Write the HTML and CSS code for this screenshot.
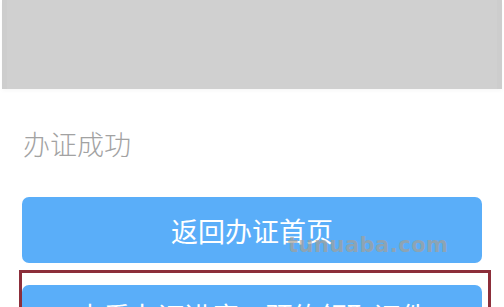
FILE: index.html
```html
<!DOCTYPE html>
<html lang="zh-CN">
<head>
<meta charset="utf-8">
<link rel="stylesheet" href="styles.css">
</head>
<body>
  <div class="header"></div>
  <div class="title">办证成功</div>
  <div class="btn btn-home">返回办证首页<span class="watermark">tunuaba.com</span></div>
  <div class="highlight">
    <div class="btn btn-next">查看办证进度，预约领取证件</div>
  </div>
</body>
</html>
```

FILE: styles.css
```css
html, body {
  margin: 0;
  padding: 0;
  background: #ffffff;
  font-family: "Noto Sans CJK SC", "Noto Sans", sans-serif;
  overflow: hidden;
}

.header {
  height: 89px;
  margin: 0 2px;
  background: #d0d0d0;
  border-left: 5px solid #cdcdcd;
  border-right: 5px solid #cdcdcd;
  box-shadow: 0 2px 4px rgba(0, 0, 0, 0.03);
}

.title {
  margin-top: 40px;
  padding-left: 23px;
  font-size: 27px;
  line-height: 30px;
  color: #a2a2a2;
  font-weight: 300;
}

.btn {
  position: relative;
  height: 66px;
  width: 460px;
  border-radius: 7px;
  background: #5aaef9;
  color: #ffffff;
  font-size: 27px;
  display: flex;
  align-items: center;
  justify-content: center;
  box-sizing: border-box;
}

.btn-home {
  margin: 38px 0 0 22px;
}

.watermark {
  position: absolute;
  left: 266px;
  top: 37px;
  font-family: "DejaVu Sans", sans-serif;
  font-weight: bold;
  font-size: 21px;
  line-height: 22px;
  color: rgba(165, 160, 150, 0.7);
  letter-spacing: 0.5px;
}

.highlight {
  margin: 7px 13px 0 19px;
  border: 3px solid #8c2e3a;
  padding-top: 12px;
  height: 80px;
}

.btn-next {
  padding-bottom: 5px;
}
```
